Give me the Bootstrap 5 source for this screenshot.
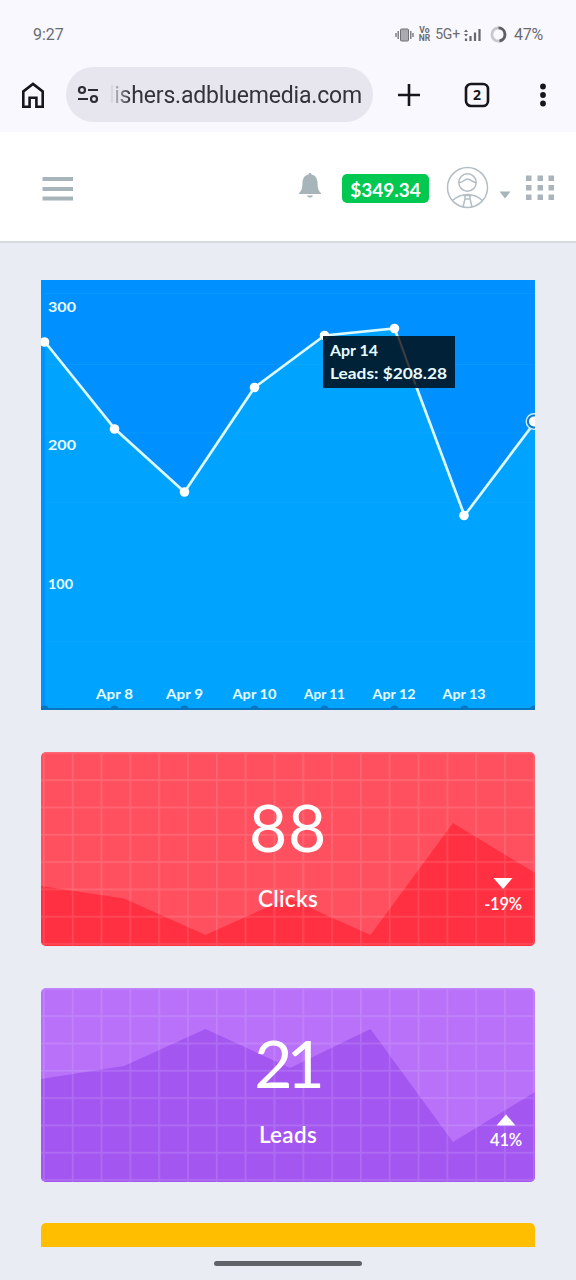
<!DOCTYPE html>
<html lang="en">
<head>
<meta charset="utf-8">
<meta name="viewport" content="width=device-width, initial-scale=1">
<title>Publisher dashboard</title>
<link href="https://cdn.jsdelivr.net/npm/bootstrap@5.3.0/dist/css/bootstrap.min.css" rel="stylesheet">
<style>
body{background:#e9edf3;font-family:Lato,"Liberation Sans",sans-serif;height:1280px;overflow:hidden}
svg{display:block;flex:none}
.browser{background:#f9f8fe;height:132px;font-family:Roboto,"Liberation Sans",sans-serif}
.status{height:67px;padding:2px 33px 0 33px;color:#6b6b70;font-size:16px}
.status .sig{font-size:14px;letter-spacing:-.2px}
.status .vonr{font-size:8.5px;line-height:7.500px;font-weight:700}
.toolbar{height:55px;padding:0 24px 0 20px}
.pill{width:307px;height:55px;background:#e7e5ee;border-radius:28px;margin-left:20px;padding:0 11px 0 10px}
.url{width:252px;font-size:23px;letter-spacing:-.18px;color:#33333b;white-space:nowrap;padding-top:3px;-webkit-mask-image:linear-gradient(90deg,transparent 0,#000 20px);mask-image:linear-gradient(90deg,transparent 0,#000 20px)}
.topbar{height:111px;border-bottom:2px solid #d3dbdf;padding:2px 21px 0 42px}
.balance{background:#00c851;width:87px;height:29px;font-size:19px;font-weight:700;border-radius:5px;padding:2px 0 0}
.panel{padding:37px 41px 0}
.plot{width:494px;height:430px;margin-bottom:42px}
.plot text{fill:#e8fbff;font-weight:700;font-size:14px}
.tile{height:194px;border-radius:5px;overflow:hidden;color:#fff;margin-bottom:42px;border:0}
.tile .num{font-size:66px;line-height:66px;padding-top:42px;height:127px}
.tile .n88{letter-spacing:.8px}
.tile .n21{letter-spacing:-6px;padding-right:3px}
.tile .lbl{font-size:22.5px;line-height:40px;font-weight:600;letter-spacing:.3px}
.delta{right:13px;top:125px;font-size:16.500px;line-height:22px;font-weight:600;letter-spacing:-.2px}
.stub{height:24px;background:#ffbe00;border-radius:5px 5px 0 0;margin-top:-1px}
.home-bar{width:148px;height:5px;background:#606468;margin:14px auto 0}
</style>
</head>
<body>
<header class="browser">
  <div class="status d-flex align-items-center">
    <span>9:27</span>
    <svg class="ms-auto" width="19" height="14" viewBox="0 0 19 14"><rect x="5.500" y="1" width="8" height="12" rx="1" fill="#aaaab0" stroke="#707076"/><path d="M3.200 3v8M15.800 3v8M1 5v4M18 5v4" stroke="#77777d" stroke-width="1.400"/></svg>
    <span class="vonr text-center" style="margin-left:5px">Vo<br>NR</span>
    <span class="sig" style="margin-left:5px">5G+</span>
    <svg style="margin-left:4px" width="17" height="14" viewBox="0 0 17 14"><path d="M6.500 8v5M11 4.500v8.500M15.500 1v12M2 10.500v2.500" stroke="#66666c" stroke-width="2.200"/><path d="M0 4l2-2.500L4 4zM0 6l2 2.500L4 6z" fill="#66666c"/></svg>
    <svg style="margin-left:9px;margin-right:7px" width="17" height="17" viewBox="0 0 17 17" fill="none" stroke-width="2.800"><circle cx="8.500" cy="8.500" r="6.600" stroke="#c9c8ce"/><path d="M8.500 1.900a6.600 6.600 0 0 1 1 13.100" stroke="#5f5f65"/></svg>
    <span style="letter-spacing:-.2px">47%</span>
  </div>
  <div class="toolbar d-flex align-items-center">
    <svg width="26" height="28" viewBox="0 0 26 28" fill="none" stroke="#16161c" stroke-width="2.600"><path d="M3.300 25.700V10.500L13 3l9.700 7.500v15.200h-6.300v-9H9.600v9z"/></svg>
    <div class="pill d-flex align-items-center justify-content-between">
      <svg width="24" height="24" viewBox="0 0 24 24" fill="none" stroke="#2c2c33" stroke-width="2.200"><circle cx="6" cy="7" r="3"/><circle cx="18" cy="16" r="3"/><path d="M12 7h10M2 16h10"/></svg>
      <div class="url d-flex justify-content-end align-items-center">
        <svg width="5" height="16" viewBox="0 0 5 16"><path d="M0 2c5 1 5 12 0 13" fill="none" stroke="#33333b" stroke-width="2"/></svg><span>lishers.adbluemedia.com</span>
      </div>
    </div>
    <svg style="margin-left:24px" width="24" height="24" viewBox="0 0 24 24"><path d="M12 1v22M1 12h22" stroke="#16161c" stroke-width="2.600"/></svg>
    <svg style="margin-left:43px" width="26" height="26" viewBox="0 0 26 26"><rect x="2" y="2" width="22" height="22" rx="5" fill="none" stroke="#16161c" stroke-width="2.600"/><text x="13" y="18" text-anchor="middle" font-size="14" font-weight="700" fill="#16161c" font-family="Open Sans,sans-serif">2</text></svg>
    <svg class="ms-auto" width="18" height="24" viewBox="0 0 18 24" fill="#16161c"><circle cx="9" cy="3.500" r="2.900"/><circle cx="9" cy="12" r="2.900"/><circle cx="9" cy="20.500" r="2.900"/></svg>
  </div>
</header>

<nav class="topbar bg-white d-flex align-items-center">
  <svg style="margin-top:2px" width="32" height="26" viewBox="0 0 32 26" fill="#a7b4b9"><path d="M.5 1H31v4H.5zM.5 11H31v4H.5zM.5 20.500H31v4H.5z"/></svg>
  <svg class="ms-auto" style="margin-bottom:4px" width="24" height="26" viewBox="0 0 24 26" fill="#a7b4b9"><path d="M12 0c1 0 1.500.7 1.500 1.600 4 .8 5.800 4 6 8 .2 5.500.8 8.500 3.500 10.400V21H1v-1c2.700-1.900 3.300-4.900 3.500-10.400.2-4 2-7.200 6-8C10.500.7 11 0 12 0zM9 22.500h6c-.6 1.400-1.600 2-3 2s-2.400-.6-3-2z"/></svg>
  <span class="badge balance d-flex align-items-center justify-content-center" style="margin:1px 0 0 20px">$349.34</span>
  <svg style="margin-left:17px" width="43" height="43" viewBox="0 0 43 43" fill="none" stroke="#b3bec5" stroke-width="1.500"><circle cx="21.500" cy="21.500" r="20"/><circle cx="21.500" cy="16.500" r="8.700"/><path d="M13 16.500c4 .5 5-3.500 8.500-3.500s4.500 3.500 8.500 3.500M6.500 34.500C11 30.500 16 28.500 21.500 28.500s10.500 2 15 6M17.500 29.500h8M19 29.500v3.500l-2 8M24 29.500v3.500l2 8M19 33h5"/></svg>
  <svg style="margin:15px 0 0 10px" width="12" height="8" viewBox="0 0 12 8"><path d="M.5.5h11L6 7.500z" fill="#a7b4b9"/></svg>
  <svg style="margin-left:14px" width="30" height="26" viewBox="0 0 30 26" fill="#a9b5ba"><path d="M1 .500h5.500v5.500h-5.500zM12.500 .5h5.500v5.500h-5.500zM23.500.5h5.500v5.500h-5.500zM1 10h5.500v5.500h-5.500zM12.500 10h5.500v5.500h-5.500zM23.500 10h5.500v5.500h-5.500zM1 19.500h5.500v5.500h-5.500zM12.500 19.500h5.500v5.500h-5.500zM23.500 19.500h5.500v5.500h-5.500z"/></svg>
</nav>

<main class="panel">
  <svg class="plot" viewBox="0 0 494 430">
    <rect width="494" height="430" fill="#0090ff"/>
    <path d="M4 430V62L74 149L143.500 212L213.500 107.500L283.500 55.500L353.500 48.500L423.500 235.500L494 142V430z" fill="#00a4ff"/>
    <path d="M4 13.500H494M4 84.500H494M4 153H494M4 222.500H494M4 361.500H494" stroke="#18a8ff" stroke-opacity=".35"/>
    <path d="M4 62L74 149L143.500 212L213.500 107.500L283.500 55.500L353.500 48.500L423.500 235.500L494 142" fill="none" stroke="#dcfaff" stroke-width="2.700"/>
    <g fill="#fff"><circle cx="3.500" cy="62" r="4.800"/><circle cx="73.500" cy="149" r="4.800"/><circle cx="143.500" cy="212" r="4.800"/><circle cx="213.500" cy="107.500" r="4.800"/><circle cx="283.500" cy="55.500" r="4.800"/><circle cx="353.500" cy="48.500" r="4.800"/><circle cx="423" cy="235.500" r="4.800"/></g>
    <circle cx="493" cy="141.500" r="7.800" fill="#1479cc" stroke="#c8efff" stroke-width="1.400"/><circle cx="493" cy="141.500" r="5" fill="#fff"/>
    <path d="M0 429H494" stroke="#0876bf" stroke-width="2"/>
    <g fill="#0876bf"><circle cx="3.500" cy="430" r="4.500"/><circle cx="73.500" cy="430" r="4.500"/><circle cx="143.500" cy="430" r="4.500"/><circle cx="213.500" cy="430" r="4.500"/><circle cx="283.500" cy="430" r="4.500"/><circle cx="353.500" cy="430" r="4.500"/><circle cx="423.500" cy="430" r="4.500"/><circle cx="493" cy="430" r="4.500"/></g>
    <g>
      <text x="7" y="31.500" textLength="28" lengthAdjust="spacingAndGlyphs">300</text>
      <text x="7" y="170" textLength="28" lengthAdjust="spacingAndGlyphs">200</text>
      <text x="7" y="308.500" textLength="25" lengthAdjust="spacingAndGlyphs">100</text>
      <text x="55" y="419" textLength="37" lengthAdjust="spacingAndGlyphs">Apr 8</text>
      <text x="125" y="419" textLength="37" lengthAdjust="spacingAndGlyphs">Apr 9</text>
      <text x="191.500" y="419" textLength="44" lengthAdjust="spacingAndGlyphs">Apr 10</text>
      <text x="263" y="419" textLength="41" lengthAdjust="spacingAndGlyphs">Apr 11</text>
      <text x="331.500" y="419" textLength="43" lengthAdjust="spacingAndGlyphs">Apr 12</text>
      <text x="401.500" y="419" textLength="43" lengthAdjust="spacingAndGlyphs">Apr 13</text>
    </g>
    <rect x="282" y="56" width="132" height="52" fill="#001a2c" fill-opacity=".94"/>
    <path d="M357 56L374.500 104.500" stroke="#4b4343" stroke-width="2" opacity=".8"/>
    <text x="289" y="75.500" textLength="48" lengthAdjust="spacingAndGlyphs" style="font-size:15.500px">Apr 14</text>
    <text x="289" y="98.500" textLength="117" lengthAdjust="spacingAndGlyphs" style="font-size:15.500px">Leads: $208.28</text>
  </svg>

  <section class="tile card text-center" style="background:#ff505f">
    <svg class="position-absolute top-0 start-0" width="494" height="194" viewBox="0 0 494 194">
      <defs><pattern id="mesh" x="2" y="0" width="28.820" height="27.300" patternUnits="userSpaceOnUse"><path d="M.8 0V27.300M0 .8H28.820" stroke="#fff" stroke-opacity=".13" stroke-width="1.600"/></pattern></defs>
      <path d="M0 134L83 146.500L164.500 183L247 146L329.500 183L412 71L494 121V194H0z" fill="#ff3041"/>
      <rect width="494" height="194" fill="url(#mesh)"/>
    </svg>
    <div class="num n88 position-relative">88</div>
    <div class="lbl position-relative">Clicks</div>
    <div class="delta position-absolute d-flex flex-column align-items-center">
      <svg width="20" height="16" viewBox="0 0 20 16"><path d="M.5 1h19L10 12z" fill="#fff"/></svg><span>-19%</span>
    </div>
  </section>

  <section class="tile card text-center" style="background:#b871f8">
    <svg class="position-absolute top-0 start-0" width="494" height="194" viewBox="0 0 494 194">
      <path d="M0 91L83 78L164.500 41L249 80L329.500 41L412 154L494 104V194H0z" fill="#a457f0"/>
      <rect width="494" height="194" fill="url(#mesh)"/>
    </svg>
    <div class="num n21 position-relative">21</div>
    <div class="lbl position-relative">Leads</div>
    <div class="delta position-absolute d-flex flex-column align-items-center">
      <svg width="20" height="16" viewBox="0 0 20 16"><path d="M.5 12.500h19L10 1.500z" fill="#fff"/></svg><span>41%</span>
    </div>
  </section>

  <div class="stub"></div>
</main>
<div class="home-bar rounded-pill"></div>
<script src="https://cdn.jsdelivr.net/npm/bootstrap@5.3.0/dist/js/bootstrap.bundle.min.js"></script>
</body>
</html>
